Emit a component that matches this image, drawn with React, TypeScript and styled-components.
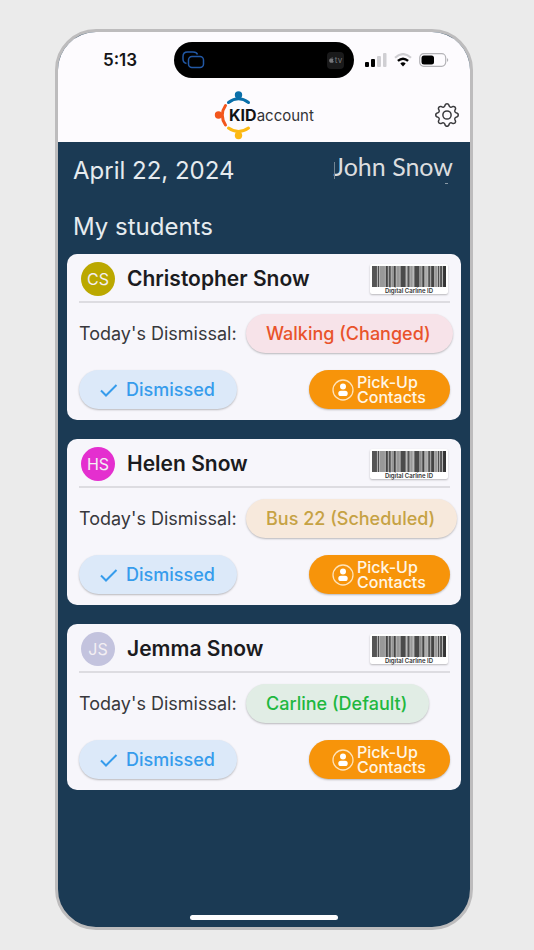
import React from "react";
import styled, { createGlobalStyle } from "styled-components";
import { BsGear } from "react-icons/bs";

const GlobalStyle = createGlobalStyle`
  *, *::before, *::after { box-sizing: border-box; }
  body { margin: 0; background: #ebebeb; font-family: Inter, "Liberation Sans", sans-serif; }
  button { font: inherit; border: 0; cursor: pointer; }
`;

const Stage = styled.div`
  min-height: 100vh;
  padding: 29px 61px 20px 55px;
  display: flex;
`;

const Phone = styled.div`
  flex: 1;
  min-width: 0;
  display: flex;
  flex-direction: column;
  border: 3px solid #bdbcbd;
  border-radius: 41px;
  overflow: hidden;
  background: #1b3a54;
`;

const TopBar = styled.header`
  background: #fdfbfe;
  padding: 10px 11px 0;
`;

const StatusRow = styled.div`
  display: grid;
  grid-template-columns: 1fr 180px 1fr;
  align-items: center;
`;

const Time = styled.time`
  padding-left: 34px;
  font-size: 17px;
  line-height: 20px;
  font-weight: 600;
  color: #151517;
`;

const Island = styled.div`
  height: 36px;
  padding: 0 10px 0 8px;
  border-radius: 18px;
  background: #000;
  display: flex;
  align-items: center;
  justify-content: space-between;
`;

const TvBadge = styled.span`
  display: flex;
  align-items: center;
  justify-content: center;
  gap: 1px;
  width: 17px;
  height: 17px;
  border-radius: 4px;
  background: #1a1a1b;
  color: #77777a;
  font-size: 8px;
  line-height: 8px;
`;

const StatusIcons = styled.div`
  display: flex;
  align-items: center;
  gap: 7px;
  padding-left: 11px;
`;

const BrandRow = styled.div`
  display: grid;
  grid-template-columns: 1fr auto 1fr;
  align-items: center;
  height: 64px;
  padding-top: 10px;
`;

const Logo = styled.div`
  grid-column: 2;
  display: grid;
  align-items: center;
  & > * { grid-area: 1 / 1; }
`;

const LogoName = styled.span`
  padding-left: 15px;
  font-size: 15px;
  line-height: 20px;
  font-weight: 400;
  color: #333336;
  b { font-size: 16px; font-weight: 700; color: #121214; }
`;

const GearButton = styled.button`
  justify-self: end;
  display: flex;
  padding: 0;
  background: none;
  color: #3b3b3e;
`;

const Content = styled.main`
  flex: 1;
  padding: 12px 9px 0;
  color: #e6ebef;
`;

const DateRow = styled.div`
  display: flex;
  justify-content: space-between;
  padding: 0 8px 0 6px;
`;

const DateText = styled.time`
  font-size: 24px;
  line-height: 34px;
`;

const UserName = styled.span`
  position: relative;
  align-self: flex-start;
  font-family: Lato, sans-serif;
  font-size: 25px;
  line-height: 24px;
  color: #dcdddf;
  &::before {
    content: "";
    position: absolute;
    left: 0;
    top: 8px;
    width: 1px;
    height: 17px;
    background: #718493;
  }
  &::after {
    content: "";
    position: absolute;
    right: 5px;
    bottom: -6px;
    width: 3px;
    height: 1px;
    background: #8a9aa6;
  }
`;

const SectionTitle = styled.h1`
  margin: 22px 0 10px;
  padding-left: 6px;
  font-size: 24px;
  line-height: 34px;
  font-weight: 400;
`;

const CardList = styled.div`
  display: flex;
  flex-direction: column;
  gap: 19px;
`;

const Card = styled.article`
  padding: 0 11px 11px 12px;
  border-radius: 10px;
  background: #f7f6fb;
`;

const CardHead = styled.div`
  display: flex;
  align-items: center;
  height: 49px;
  padding-top: 2px;
  border-bottom: 2px solid #dddce1;
`;

const Avatar = styled.span<{ $color: string }>`
  display: flex;
  align-items: center;
  justify-content: center;
  width: 34px;
  height: 34px;
  margin-left: 2px;
  border-radius: 50%;
  background: ${(p) => p.$color};
  color: #f3eff3;
  font-size: 16px;
`;

const StudentName = styled.h2`
  flex: 1;
  margin: 0 0 0 12px;
  font-size: 21px;
  line-height: 26px;
  font-weight: 600;
  color: #1b1b20;
`;

const BarcodeButton = styled.button`
  display: flex;
  flex-direction: column;
  align-items: center;
  width: 78px;
  margin-right: 2px;
  padding: 2px 2px 0;
  border-radius: 2px;
  background: #fff;
  box-shadow: 0 1px 2px rgba(0, 0, 0, 0.25);
  && { font-size: 6px; line-height: 7px; font-weight: 600; }
  color: #333;
`;

const Line = styled.div`
  display: flex;
  align-items: center;
  margin-top: 11px;
`;

const Label = styled.span`
  flex: none;
  width: 167px;
  font-size: 18px;
  line-height: 24px;
  color: #38383c;
`;

const Pill = styled.button<{ $fg: string; $bg: string }>`
  flex: none;
  display: flex;
  align-items: center;
  gap: 8px;
  height: 39px;
  padding: 0 22px 0 20px;
  border-radius: 20px;
  background: ${(p) => p.$bg};
  color: ${(p) => p.$fg};
  box-shadow: 0 1px 2px rgba(0, 0, 0, 0.25);
  && { font-size: 18px; font-weight: 500; }
`;

const Actions = styled.div`
  display: flex;
  justify-content: space-between;
  margin-top: 17px;
`;

const ContactsButton = styled(Pill)`
  gap: 3px;
  width: 141px;
  padding: 0 0 0 23px;
  text-align: left;
  && { font-size: 16px; line-height: 15px; font-weight: 500; }
`;

const HomeBar = styled.div`
  align-self: center;
  width: 36%;
  height: 5px;
  margin-bottom: 7px;
  border-radius: 3px;
  background: #fdfdfe;
`;

function LogoMark() {
  return (
    <svg width="37" height="50" viewBox="0 0 37 50" fill="none" strokeWidth="3" strokeLinecap="round" aria-hidden="true">
      <circle cx="24.5" cy="5" r="3.7" fill="#0a6fa9" />
      <path d="M14.5 12.5Q24.5 5 34.5 12.5" stroke="#0a6fa9" />
      <circle cx="4.5" cy="25" r="3.7" fill="#f2561d" />
      <path d="M11.5 15.5Q5 25 11.5 35" stroke="#f2561d" />
      <circle cx="24.5" cy="45.5" r="3.7" fill="#fcb913" />
      <path d="M14.5 38Q24.5 45 34.5 38" stroke="#fcb913" />
    </svg>
  );
}

const BARS = [
  [0, 5, "#555"], [6, 1, "#444"], [8, 5, "#999"], [14, 2, "#444"], [17, 2, "#555"], [20, 1, "#888"],
  [22, 2, "#444"], [25, 3, "#999"], [29, 5, "#4a4a4a"], [36, 2, "#555"], [39, 2, "#999"], [43, 5, "#4a4a4a"],
  [49, 1, "#777"], [51, 2, "#444"], [54, 2, "#aaa"], [57, 2, "#555"], [60, 3, "#444"], [64, 2, "#999"],
  [67, 1, "#444"], [69, 2, "#555"], [72, 3, "#333"],
] as const;

function Barcode() {
  return (
    <svg width="74" height="21" viewBox="0 0 75 21" preserveAspectRatio="none" aria-hidden="true">
      <rect width="75" height="21" fill="#b9b9b9" />
      {BARS.map(([x, w, c]) => <rect key={x} x={x} width={w} height="21" fill={c} />)}
    </svg>
  );
}

type Student = { name: string; initials: string; color: string; plan: string; fg: string; bg: string };

const students: Student[] = [
  { name: "Christopher Snow", initials: "CS", color: "#bba800", plan: "Walking (Changed)", fg: "#e9532b", bg: "#f7e3e9" },
  { name: "Helen Snow", initials: "HS", color: "#e42fcf", plan: "Bus 22 (Scheduled)", fg: "#c6a244", bg: "#f7e9dc" },
  { name: "Jemma Snow", initials: "JS", color: "#c3c3de", plan: "Carline (Default)", fg: "#1fb83f", bg: "#e1ede5" },
];

function StudentCard({ s }: { s: Student }) {
  return (
    <Card>
      <CardHead>
        <Avatar $color={s.color}>{s.initials}</Avatar>
        <StudentName>{s.name}</StudentName>
        <BarcodeButton type="button">
          <Barcode />
          Digital Carline ID
        </BarcodeButton>
      </CardHead>
      <Line>
        <Label>Today's Dismissal:</Label>
        <Pill type="button" $fg={s.fg} $bg={s.bg}>{s.plan}</Pill>
      </Line>
      <Actions>
        <Pill type="button" $fg="#369cec" $bg="#dce9f9">
          <svg width="19" height="16" viewBox="0 0 19 16" fill="none" stroke="currentColor" strokeWidth="2" aria-hidden="true">
            <path d="M2 8.5L7 13.5L17.5 3" />
          </svg>
          Dismissed
        </Pill>
        <ContactsButton type="button" $fg="#fff6e6" $bg="#f7940a">
          <svg width="22" height="22" viewBox="0 0 22 22" fill="#fff" aria-hidden="true">
            <circle cx="11" cy="11" r="10" fill="none" stroke="#fde3bb" strokeWidth="1.3" />
            <circle cx="11" cy="7.5" r="3" />
            <rect x="6.3" y="11.7" width="9.4" height="5.4" rx="2.6" />
          </svg>
          <span>Pick-Up<br />Contacts</span>
        </ContactsButton>
      </Actions>
    </Card>
  );
}

export default function App() {
  return (
    <>
      <GlobalStyle />
      <Stage>
        <Phone>
          <TopBar>
            <StatusRow>
              <Time>5:13</Time>
              <Island>
                <svg width="23" height="18" viewBox="0 0 23 18" fill="none" stroke="#2258a5" strokeWidth="1.5" aria-hidden="true">
                  <path d="M4.5 12.5C2 12 1 10.5 1 8V5.5C1 2.5 2.5 1 5.5 1H11C13.5 1 15 1.8 15.5 3.5" />
                  <rect x="6.5" y="5.5" width="15" height="11" rx="3.5" />
                </svg>
                <TvBadge>
                  <svg width="5" height="6" viewBox="0 0 10 12" fill="currentColor" aria-hidden="true">
                    <path d="M5 3.5C6 3 8 2.6 9.2 4.3C7.4 5.5 7.6 8 9.6 9C8.8 11 7.5 12.3 5.8 11.5C5.2 11.2 4.7 11.2 4 11.5C1.8 12.4 0 9 .3 6.5C.6 3.7 3 2.7 5 3.5ZM5 2.8C4.9 1.3 6 .2 7.2 0C7.3 1.5 6.3 2.7 5 2.8Z" />
                  </svg>
                  tv
                </TvBadge>
              </Island>
              <StatusIcons>
                <svg width="22" height="14" viewBox="0 0 22 14" aria-hidden="true">
                  <rect x="0" y="9" width="4" height="5" rx="1" fill="#000" />
                  <rect x="6" y="6" width="4" height="8" rx="1" fill="#000" />
                  <rect x="12" y="3" width="4" height="11" rx="1" fill="#d0cfd3" />
                  <rect x="18" y="0" width="3.5" height="14" rx="1" fill="#d0cfd3" />
                </svg>
                <svg width="18" height="14" viewBox="0 0 18 14" fill="none" aria-hidden="true">
                  <path d="M1 4.7Q9-2.5 17 4.7" stroke="#cfced2" strokeWidth="2.2" />
                  <path d="M3.9 7.9Q9 3.4 14.1 7.9" stroke="#000" strokeWidth="2.4" />
                  <path d="M6.3 10.4Q9 8.2 11.7 10.4L9 13.4Z" fill="#000" />
                </svg>
                <svg width="30" height="14" viewBox="0 0 30 14" fill="none" aria-hidden="true">
                  <rect x="0.7" y="0.7" width="26" height="12.6" rx="4" stroke="#b4b3b7" strokeWidth="1.2" />
                  <rect x="2.5" y="2.5" width="12.5" height="9" rx="2.5" fill="#000" />
                  <path d="M28 5Q30.5 7 28 9Z" fill="#b4b3b7" />
                </svg>
              </StatusIcons>
            </StatusRow>
            <BrandRow>
              <Logo>
                <LogoMark />
                <LogoName><b>KID</b>account</LogoName>
              </Logo>
              <GearButton type="button" aria-label="Settings"><BsGear size={24} /></GearButton>
            </BrandRow>
          </TopBar>
          <Content>
            <DateRow>
              <DateText dateTime="2024-04-22">April 22, 2024</DateText>
              <UserName>John Snow</UserName>
            </DateRow>
            <SectionTitle>My students</SectionTitle>
            <CardList>
              {students.map((s) => <StudentCard key={s.name} s={s} />)}
            </CardList>
          </Content>
          <HomeBar />
        </Phone>
      </Stage>
    </>
  );
}
